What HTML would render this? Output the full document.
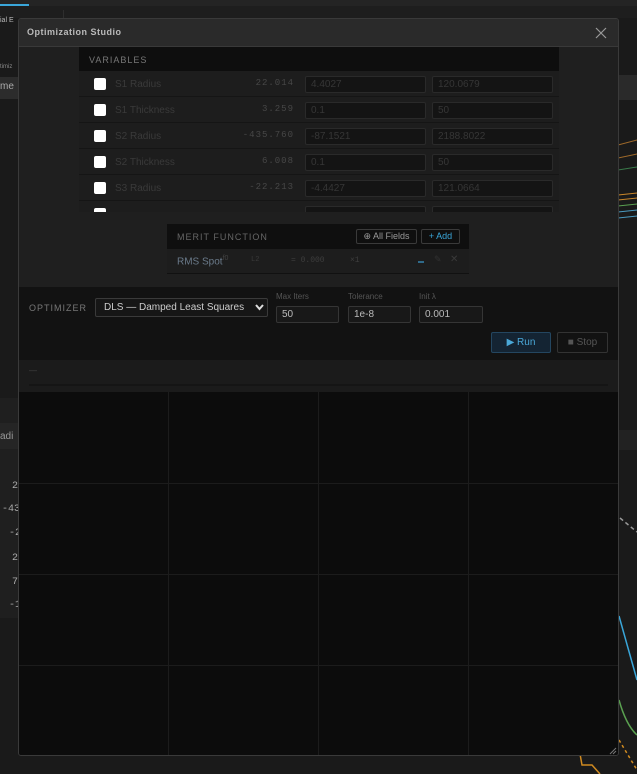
<!DOCTYPE html>
<html><head><style>
*{box-sizing:border-box;margin:0;padding:0}
body{width:637px;height:774px;background:#1a1a1a;position:relative;overflow:hidden;font-family:"Liberation Sans",sans-serif;color:#ccc}
.a{position:absolute}
.mono{font-family:"Liberation Mono",monospace}
.inp{position:absolute;height:17px;background:#141414;border:1px solid #2a2a2a;border-radius:2px;color:#363636;font-size:10px;padding:2px 5px;line-height:11px}
.cb{position:absolute;width:12px;height:12px;background:#fff;border-radius:2px;left:15px}
.row{position:absolute;left:0;width:480px;height:26px;border-bottom:1px solid #151515}
.lbl{position:absolute;left:36px;top:8px;font-size:10px;color:#3a3a3a}
.val{position:absolute;right:265px;top:7px;font-size:9px;color:#474747;letter-spacing:1px}
.i1{left:226px;top:5px;width:121px}
.i2{left:353px;top:5px;width:121px}
</style></head><body>
<div class="a" style="left:0;top:0;width:637px;height:6px;background:#242424"></div>
<div class="a" style="left:0;top:4px;width:29px;height:2px;background:#3aa6d9"></div>
<div class="a" style="left:0;top:6px;width:637px;height:12px;background:#1e1e1e"></div>
<div class="a" style="left:63px;top:10px;width:1px;height:380px;background:#2e2e2e"></div>
<div class="a" style="left:0;top:17px;font-size:7px;color:#bbb">ial E</div>
<div class="a" style="left:0;top:64px;font-size:6px;color:#888">timiz</div>
<div class="a" style="left:0;top:77px;width:19px;height:22px;background:#2c2c2c"></div>
<div class="a" style="left:0;top:81px;font-size:10px;color:#aaa">me</div>
<div class="a" style="left:0;top:398px;width:19px;height:220px;background:#1f1f1f"></div>
<div class="a" style="left:0;top:423px;width:19px;height:26px;background:#252525"></div>
<div class="a" style="left:0;top:431px;font-size:10px;color:#999">adi</div>
<div class="a mono" style="left:12px;top:481px;font-size:10px;color:#aaa">2</div>
<div class="a mono" style="left:2px;top:504px;font-size:10px;color:#aaa">-43</div>
<div class="a mono" style="left:9px;top:528px;font-size:10px;color:#aaa">-2</div>
<div class="a mono" style="left:12px;top:553px;font-size:10px;color:#aaa">2</div>
<div class="a mono" style="left:12px;top:577px;font-size:10px;color:#aaa">7</div>
<div class="a mono" style="left:9px;top:600px;font-size:10px;color:#aaa">-1</div>
<div class="a" style="left:618px;top:75px;width:19px;height:25px;background:#2a2a2a"></div>
<div class="a" style="left:618px;top:430px;width:19px;height:20px;background:#222"></div>
<svg class="a" style="left:618px;top:100px" width="19" height="674">
<g stroke-width="1"><line x1="0" y1="45" x2="19" y2="40" stroke="#a06a2a"/><line x1="0" y1="58" x2="19" y2="54" stroke="#a06a2a"/><line x1="0" y1="70" x2="19" y2="67" stroke="#3a7a4a"/>
<line x1="0" y1="95" x2="19" y2="93" stroke="#c8862a"/><line x1="0" y1="100" x2="19" y2="98" stroke="#c8862a"/><line x1="0" y1="106" x2="19" y2="104" stroke="#5aa050"/><line x1="0" y1="112" x2="19" y2="110" stroke="#4a9ac0"/><line x1="0" y1="118" x2="19" y2="116" stroke="#4a9ac0"/></g>
<line x1="2" y1="418" x2="19" y2="432" stroke="#999" stroke-dasharray="4 3" stroke-width="1.5"/>
<line x1="1" y1="516" x2="19" y2="580" stroke="#3aa6d9" stroke-width="1.5"/>
<path d="M1 600 Q8 625 19 635" stroke="#5aa050" fill="none" stroke-width="1.5"/>
<line x1="1" y1="640" x2="19" y2="670" stroke="#d08a20" stroke-dasharray="3 3" stroke-width="1.5"/>
</svg>
<svg class="a" style="left:0;top:0" width="637" height="774"><path d="M580 754 L582 765 L592 765 L600 774" stroke="#d08a20" fill="none" stroke-width="1.5"/></svg>
<div class="a" style="left:18px;top:18px;width:601px;height:738px;border:1px solid #3a3a3a;border-radius:3px;background:#1f1f1f;overflow:hidden">
 <div class="a" style="left:0;top:0;width:599px;height:28px;background:#2a2a2a;border-bottom:1px solid #393939"></div>
 <div class="a" style="left:8px;top:8px;font-size:9px;font-weight:bold;color:#bbb;letter-spacing:.5px">Optimization Studio</div>
 <svg class="a" style="left:576px;top:8px" width="12" height="12"><path d="M1 1L11 11M11 1L1 11" stroke="#999" stroke-width="1.2"/></svg>
 <div class="a" style="left:60px;top:28px;width:480px;height:165px;background:#1d1d1d;overflow:hidden">
  <div class="a" style="left:0;top:0;width:480px;height:24px;background:#0e0e0e"></div>
  <div class="a" style="left:10px;top:8px;font-size:9px;color:#777;letter-spacing:1px">VARIABLES</div>
  <div class="row" style="top:24px"><div class="cb" style="top:7px"></div><div class="lbl">S1 Radius</div><div class="val mono">22.014</div><div class="inp i1">4.4027</div><div class="inp i2">120.0679</div></div>
  <div class="row" style="top:50px"><div class="cb" style="top:7px"></div><div class="lbl">S1 Thickness</div><div class="val mono">3.259</div><div class="inp i1">0.1</div><div class="inp i2">50</div></div>
  <div class="row" style="top:76px"><div class="cb" style="top:7px"></div><div class="lbl">S2 Radius</div><div class="val mono">-435.760</div><div class="inp i1">-87.1521</div><div class="inp i2">2188.8022</div></div>
  <div class="row" style="top:102px"><div class="cb" style="top:7px"></div><div class="lbl">S2 Thickness</div><div class="val mono">6.008</div><div class="inp i1">0.1</div><div class="inp i2">50</div></div>
  <div class="row" style="top:128px"><div class="cb" style="top:7px"></div><div class="lbl">S3 Radius</div><div class="val mono">-22.213</div><div class="inp i1">-4.4427</div><div class="inp i2">121.0664</div></div>
  <div class="row" style="top:154px"><div class="cb" style="top:7px"></div><div class="inp i1"></div><div class="inp i2"></div></div>
 </div>
 <div class="a" style="left:148px;top:205px;width:302px;height:50px;background:#1d1d1d;border-bottom:1px solid #111">
  <div class="a" style="left:0;top:0;width:302px;height:25px;background:#0f0f0f"></div>
  <div class="a" style="left:10px;top:8px;font-size:9px;color:#666;letter-spacing:1px">MERIT FUNCTION</div>
  <div class="a" style="left:189px;top:5px;width:61px;height:15px;border:1px solid #3a3a3a;border-radius:2px;font-size:9px;color:#999;text-align:center;line-height:13px">⊕ All Fields</div>
  <div class="a" style="left:254px;top:5px;width:39px;height:15px;border:1px solid #3a3a3a;border-radius:2px;font-size:9px;color:#3aa6d9;text-align:center;line-height:13px">+ Add</div>
  <div class="a" style="left:10px;top:31px;font-size:10px;color:#6a7a8a">RMS Spot<sup style="font-size:7px;color:#444">f0</sup></div>
  <div class="a mono" style="left:84px;top:32px;font-size:7px;color:#3a3a3a">L2</div>
  <div class="a mono" style="left:124px;top:32px;font-size:8px;color:#3e3e3e">= 0.000</div>
  <div class="a mono" style="left:183px;top:32px;font-size:8px;color:#3e3e3e">×1</div>
  <div class="a" style="left:251px;top:37px;width:6px;height:2px;background:#2f6a8a"></div>
  <div class="a" style="left:267px;top:30px;font-size:9px;color:#333">✎</div>
  <div class="a" style="left:283px;top:30px;font-size:10px;color:#3a3a3a">✕</div>
 </div>
 <div class="a" style="left:0;top:268px;width:599px;height:73px;background:#121212">
  <div class="a" style="left:10px;top:16px;font-size:9px;color:#777;letter-spacing:1px">OPTIMIZER</div>
  <div class="a" style="left:76px;top:11px;width:173px;height:19px;border:1px solid #3a3a3a;border-radius:2px;background:#161616;font-size:10px;color:#ccc;padding:3px 8px">DLS — Damped Least Squares</div>
  <svg class="a" style="left:236px;top:17px" width="9" height="7"><path d="M1 1L4.5 5L8 1" stroke="#ddd" stroke-width="2" fill="none"/></svg>
  <div class="a" style="left:257px;top:5px;font-size:8px;color:#555">Max Iters</div>
  <div class="a" style="left:329px;top:5px;font-size:8px;color:#555">Tolerance</div>
  <div class="a" style="left:400px;top:5px;font-size:8px;color:#555">Init λ</div>
  <div class="inp" style="left:257px;top:19px;width:63px;color:#bbb;background:#181818;border-color:#353535">50</div>
  <div class="inp" style="left:329px;top:19px;width:63px;color:#bbb;background:#181818;border-color:#353535">1e-8</div>
  <div class="inp" style="left:400px;top:19px;width:64px;color:#bbb;background:#181818;border-color:#353535">0.001</div>
  <div class="a" style="left:472px;top:45px;width:60px;height:21px;background:#142433;border:1px solid #244660;border-radius:2px;font-size:10px;color:#4aa8d8;text-align:center;line-height:19px">▶ Run</div>
  <div class="a" style="left:538px;top:45px;width:51px;height:21px;border:1px solid #333;border-radius:2px;font-size:10px;color:#555;text-align:center;line-height:19px">■ Stop</div>
 </div>
 <div class="a" style="left:0;top:341px;width:599px;height:32px;background:#1b1b1b">
  <div class="a" style="left:10px;top:6px;font-size:8px;color:#444">—</div>
  <div class="a" style="left:10px;top:24px;width:579px;height:2px;background:#151515"></div>
 </div>
 <div class="a" style="left:0;top:373px;width:599px;height:364px;background:#0c0c0c">
  <div class="a" style="left:149px;top:0;width:1px;height:364px;background:#1c1c1c"></div>
  <div class="a" style="left:299px;top:0;width:1px;height:364px;background:#1c1c1c"></div>
  <div class="a" style="left:449px;top:0;width:1px;height:364px;background:#1c1c1c"></div>
  <div class="a" style="left:0;top:91px;width:599px;height:1px;background:#1c1c1c"></div>
  <div class="a" style="left:0;top:182px;width:599px;height:1px;background:#1c1c1c"></div>
  <div class="a" style="left:0;top:273px;width:599px;height:1px;background:#1c1c1c"></div>
  <svg class="a" style="left:590px;top:355px" width="8" height="8"><path d="M1 7L7 1M4 7L7 4" stroke="#777" stroke-width="1"/></svg>
 </div>
</div>
</body></html>
